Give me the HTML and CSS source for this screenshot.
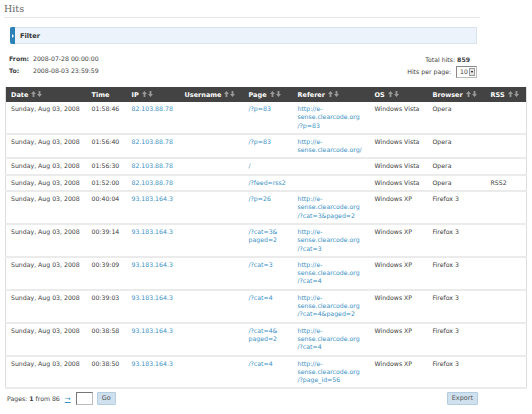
FILE: index.html
```html
<!DOCTYPE html>
<html lang="en">
<head>
  <meta charset="utf-8" />
  <title>Hits</title>
  <link rel="stylesheet" href="styles.css">
</head>
<body>
  <div class="page">
    <h1 class="page__title">Hits</h1>

    <!-- FILTER -->
    <div class="filter">
      <span class="filter__tab"></span>
      <span class="filter__label">Filter</span>
    </div>

    <!-- RANGE + TOTALS -->
    <div class="summary">
      <div class="range">
        <div class="range__row"><b>From:</b><span>2008-07-28 00:00:00</span></div>
        <div class="range__row"><b>To:</b><span>2008-08-03 23:59:59</span></div>
      </div>
      <div class="totals">
        <div>Total hits: <b>859</b></div>
        <div class="totals__pp">Hits per page: <span class="select">10 <span class="select__btn"></span></span></div>
      </div>
    </div>

    <!-- TABLA -->
    <table class="hits">
      <colgroup>
        <col style="width:81px"><col style="width:40px"><col style="width:53px">
        <col style="width:64px"><col style="width:49px"><col style="width:77px">
        <col style="width:58px"><col style="width:58px"><col style="width:41px">
      </colgroup>
      <thead>
        <tr>
          <th>Date<i class="sort"></i></th>
          <th>Time</th>
          <th>IP<i class="sort"></i></th>
          <th>Username<i class="sort"></i></th>
          <th>Page<i class="sort"></i></th>
          <th>Referer<i class="sort"></i></th>
          <th>OS<i class="sort"></i></th>
          <th>Browser<i class="sort"></i></th>
          <th>RSS<i class="sort"></i></th>
        </tr>
      </thead>
      <tbody>
        <tr>
          <td>Sunday, Aug 03, 2008</td><td>01:58:46</td><td><a>82.103.88.78</a></td><td></td>
          <td><a>/?p=83</a></td><td><a>http://e-<br>sense.clearcode.org<br>/?p=83</a></td>
          <td>Windows Vista</td><td>Opera</td><td></td>
        </tr>
        <tr>
          <td>Sunday, Aug 03, 2008</td><td>01:56:40</td><td><a>82.103.88.78</a></td><td></td>
          <td><a>/?p=83</a></td><td><a>http://e-<br>sense.clearcode.org/</a></td>
          <td>Windows Vista</td><td>Opera</td><td></td>
        </tr>
        <tr>
          <td>Sunday, Aug 03, 2008</td><td>01:56:30</td><td><a>82.103.88.78</a></td><td></td>
          <td><a>/</a></td><td></td>
          <td>Windows Vista</td><td>Opera</td><td></td>
        </tr>
        <tr>
          <td>Sunday, Aug 03, 2008</td><td>01:52:00</td><td><a>82.103.88.78</a></td><td></td>
          <td><a>/?feed=rss2</a></td><td></td>
          <td>Windows Vista</td><td>Opera</td><td>RSS2</td>
        </tr>
        <tr>
          <td>Sunday, Aug 03, 2008</td><td>00:40:04</td><td><a>93.183.164.3</a></td><td></td>
          <td><a>/?p=26</a></td><td><a>http://e-<br>sense.clearcode.org<br>/?cat=3&amp;paged=2</a></td>
          <td>Windows XP</td><td>Firefox 3</td><td></td>
        </tr>
        <tr>
          <td>Sunday, Aug 03, 2008</td><td>00:39:14</td><td><a>93.183.164.3</a></td><td></td>
          <td><a>/?cat=3&amp;<br>paged=2</a></td><td><a>http://e-<br>sense.clearcode.org<br>/?cat=3</a></td>
          <td>Windows XP</td><td>Firefox 3</td><td></td>
        </tr>
        <tr>
          <td>Sunday, Aug 03, 2008</td><td>00:39:09</td><td><a>93.183.164.3</a></td><td></td>
          <td><a>/?cat=3</a></td><td><a>http://e-<br>sense.clearcode.org<br>/?cat=4</a></td>
          <td>Windows XP</td><td>Firefox 3</td><td></td>
        </tr>
        <tr>
          <td>Sunday, Aug 03, 2008</td><td>00:39:03</td><td><a>93.183.164.3</a></td><td></td>
          <td><a>/?cat=4</a></td><td><a>http://e-<br>sense.clearcode.org<br>/?cat=4&amp;paged=2</a></td>
          <td>Windows XP</td><td>Firefox 3</td><td></td>
        </tr>
        <tr>
          <td>Sunday, Aug 03, 2008</td><td>00:38:58</td><td><a>93.183.164.3</a></td><td></td>
          <td><a>/?cat=4&amp;<br>paged=2</a></td><td><a>http://e-<br>sense.clearcode.org<br>/?cat=4</a></td>
          <td>Windows XP</td><td>Firefox 3</td><td></td>
        </tr>
        <tr>
          <td>Sunday, Aug 03, 2008</td><td>00:38:50</td><td><a>93.183.164.3</a></td><td></td>
          <td><a>/?cat=4</a></td><td><a>http://e-<br>sense.clearcode.org<br>/?page_id=56</a></td>
          <td>Windows XP</td><td>Firefox 3</td><td></td>
        </tr>
      </tbody>
    </table>

    <!-- PAGINACION -->
    <div class="pager">
      <div class="pager__left">
        <span>Pages: <b>1</b> from 86</span>
        <a class="pager__next">&rarr;</a>
        <span class="pager__input"></span>
        <span class="btn">Go</span>
      </div>
      <span class="btn">Export</span>
    </div>
  </div>
</body>
</html>
```

FILE: styles.css
```css
/* ===== reset ===== */
*, *::before, *::after {
  margin: 0;
  padding: 0;
  box-sizing: border-box;
}

body {
  background: #fff;
  font-family: "DejaVu Sans", Verdana, sans-serif;
  font-size: 6.2px;
  color: #404040;
}

.page {
  width: 476px;
  margin-left: 4px;
}

/* ===== titulo ===== */
.page__title {
  font-family: "DejaVu Serif", serif;
  font-weight: normal;
  font-size: 9.5px;
  line-height: 11px;
  color: #666;
  padding-top: 3px;
  height: 18px;
  border-bottom: 1px solid #e6e6e6;
}

/* ===== filtro ===== */
.filter {
  display: flex;
  align-items: center;
  height: 17px;
  margin: 9px 3px 0 6px;
  background: #ecf3fa;
  border: 1px solid #d9e4ee;
  border-left: none;
}
.filter__tab {
  position: relative;
  width: 5px;
  height: 17px;
  margin-top: -1px;
  margin-bottom: -1px;
  background: #2c82b8;
  border-radius: 2px 0 0 2px;
}
.filter__tab::after {
  content: '';
  position: absolute;
  top: 6.5px;
  left: 2px;
  border-left: 2px solid #fff;
  border-top: 2px solid transparent;
  border-bottom: 2px solid transparent;
}
.filter__label {
  margin-left: 5px;
  font-weight: bold;
  font-size: 6.6px;
  color: #333;
}

/* ===== resumen ===== */
.summary {
  display: flex;
  justify-content: space-between;
  align-items: flex-start;
  margin-top: 8px;
}
.range {
  padding-left: 5px;
}
.range__row {
  display: flex;
  height: 12px;
  align-items: center;
}
.range__row b {
  width: 24px;
}
.totals {
  text-align: right;
  padding-right: 3px;
  padding-top: 2px;
}
.totals div {
  height: 12px;
  line-height: 12px;
}
.totals b {
  padding-right: 7px;
}
.select {
  display: inline-block;
  vertical-align: middle;
  width: 21px;
  height: 12px;
  margin-left: 3px;
  padding-left: 3px;
  line-height: 10px;
  text-align: left;
  border: 1px solid #bbb;
  border-top-color: #888;
  border-left-color: #888;
  position: relative;
}
.select__btn {
  position: absolute;
  right: 1px;
  top: 1px;
  width: 6px;
  height: 8px;
  background: #e4e4e4;
  border: 1px solid #999;
}
.select__btn::after {
  content: '';
  position: absolute;
  left: 0.5px;
  top: 2px;
  border-top: 2px solid #000;
  border-left: 1.5px solid transparent;
  border-right: 1.5px solid transparent;
}

/* ===== tabla ===== */
.hits {
  width: 521px;
  margin-top: 9px;
  margin-left: 1px;
  table-layout: fixed;
  border-collapse: collapse;
  border-left: 1px solid #ddd;
  border-right: 1px solid #ddd;
}
.hits th {
  height: 15px;
  padding: 0 5px;
  background: #434343;
  color: #fff;
  font-size: 6.5px;
  text-align: left;
  white-space: nowrap;
}
.hits td {
  padding: 3px 3px 3px 5px;
  line-height: 8.3px;
  vertical-align: top;
  border-bottom: 2px solid #ebebeb;
  white-space: nowrap;
}
.hits a {
  color: #3a8fc3;
}

.sort {
  display: inline-block;
  width: 11px;
  height: 6px;
  margin-left: 3px;
  vertical-align: -0.5px;
  background: no-repeat url("data:image/svg+xml;utf8,<svg xmlns='http://www.w3.org/2000/svg' width='11' height='6' viewBox='0 0 11 6'><path fill='%23999' d='M2.5 0L5 3H3.4V6H1.6V3H0Z M8.5 6L11 3H9.4V0H7.6V3H6Z'/></svg>");
}

/* ===== paginacion ===== */
.pager {
  display: flex;
  justify-content: space-between;
  align-items: center;
  margin-top: 3px;
  padding-left: 3px;
}
.pager__left {
  display: flex;
  align-items: center;
  gap: 4px;
}
.pager__next {
  color: #3a8fc3;
  text-decoration: underline;
  font-size: 7px;
  margin-left: 1px;
}
.pager__input {
  width: 17px;
  height: 13px;
  border: 1px solid #bbb;
  border-top-color: #777;
  border-left-color: #777;
  margin-left: 1px;
}
.btn {
  display: inline-block;
  padding: 0 4px;
  height: 13px;
  line-height: 11px;
  background: #cfe1ef;
  border: 1px solid #b4cde1;
  border-radius: 1px;
  color: #555;
  font-size: 6.5px;
}
.pager > .btn {
  margin-right: 2px;
  padding: 0 4px;
}
```
